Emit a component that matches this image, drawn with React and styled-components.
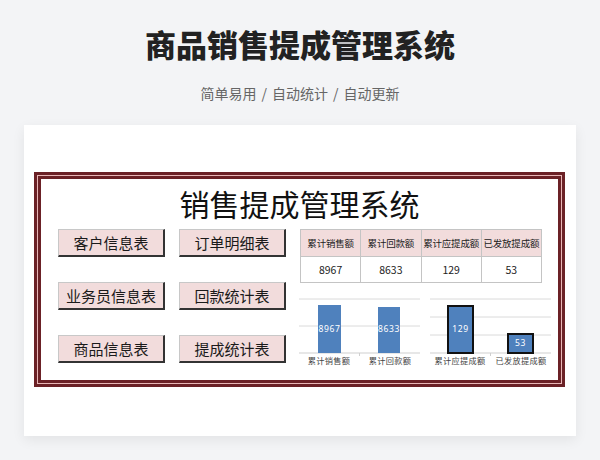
import React from 'react';
import styled, { createGlobalStyle } from 'styled-components';

const GlobalStyle = createGlobalStyle`
  body {
    margin: 0;
    background: #f3f4f6;
    font-family: "Noto Sans CJK SC", "Noto Sans", sans-serif;
  }
`;

const Page = styled.div`
  width: 600px;
  height: 460px;
  overflow: hidden;
  padding-top: 24px;
  box-sizing: border-box;
`;

const Heading = styled.h1`
  margin: 0;
  text-align: center;
  font-size: 31px;
  line-height: 40px;
  font-weight: 900;
  color: #222;
`;

const Tagline = styled.div`
  margin-top: 19px;
  text-align: center;
  font-size: 14px;
  line-height: 20px;
  color: #666;
  span { margin: 0 5px; }
`;

const Card = styled.div`
  margin: 22px 24px 0;
  height: 311px;
  box-sizing: border-box;
  background: #fff;
  padding: 47px 11px 49px 10px;
  box-shadow: 0 4px 12px rgba(0, 0, 0, 0.07);
`;

const Frame = styled.div`
  height: 215px;
  box-sizing: border-box;
  border: 3px solid #6b2126;
  box-shadow: inset 0 0 0 1px #e8b6b6, inset 0 0 0 4px #6b2126;
  padding-top: 8px;
`;

const FrameTitle = styled.div`
  text-align: center;
  font-size: 30px;
  line-height: 40px;
  color: #111;
`;

const Body = styled.div`
  display: flex;
  margin-top: 6px;
  padding-left: 21px;
`;

const ButtonGrid = styled.div`
  display: grid;
  grid-template-columns: 107px 107px;
  grid-auto-rows: 28px;
  column-gap: 14px;
  row-gap: 25px;
  align-content: start;
`;

const SheetButton = styled.div`
  box-sizing: border-box;
  background: #f2dcdc;
  border-top: 1px solid #c8c8c8;
  border-left: 1px solid #c8c8c8;
  border-right: 2px solid #333;
  border-bottom: 2px solid #333;
  display: flex;
  align-items: center;
  justify-content: center;
  font-size: 15px;
  color: #1a1a1a;
`;

const Right = styled.div`
  margin-left: 14px;
  display: flex;
  flex-direction: column;
`;

const Table = styled.table`
  border-collapse: collapse;
  width: 242px;
  table-layout: fixed;
  td {
    border: 1px solid #c4c4c4;
    text-align: center;
    padding: 0;
    color: #222;
  }
`;

const HeadCell = styled.td`
  background: #f2dcdc;
  height: 26px;
  font-size: 9.5px;
  white-space: nowrap;
  letter-spacing: -0.2px;
`;

const DataCell = styled.td`
  height: 25px;
  font-size: 10.5px;
`;

const Charts = styled.div`
  display: flex;
  gap: 10px;
  margin-top: 12px;
  margin-left: -1px;
`;

const BLUE = '#4f81bd';

function Chart({ grid, bars }) {
  return (
    <svg width="121" height="72" viewBox="0 0 121 72">
      {grid.map((y) => (
        <line key={y} x1="0" x2="121" y1={y} y2={y} stroke="#dadada" strokeWidth="1" />
      ))}
      <line x1="0" x2="121" y1="58" y2="58" stroke="#cfcfcf" strokeWidth="1" />
      <line x1="60.5" x2="60.5" y1="58" y2="61" stroke="#cfcfcf" strokeWidth="1" />
      {bars.map((b) => (
        <g key={b.label}>
          <rect
            x={b.x}
            y={b.top}
            width={b.w}
            height={58 - b.top}
            fill={BLUE}
            stroke={b.outline ? '#111' : 'none'}
            strokeWidth={b.outline ? 2 : 0}
          />
          <text
            x={b.x + b.w / 2}
            y={b.ty}
            fill="#fff"
            fontSize="8.5"
            textAnchor="middle"
            letterSpacing="0.6"
            fontFamily="Noto Sans, sans-serif"
          >
            {b.value}
          </text>
          <text
            x={b.cx}
            y="69"
            fill="#444"
            fontSize="8.2"
            textAnchor="middle"
            letterSpacing="0.3"
            fontFamily="Noto Sans CJK SC, sans-serif"
          >
            {b.label}
          </text>
        </g>
      ))}
    </svg>
  );
}

const headers = ['累计销售额', '累计回款额', '累计应提成额', '已发放提成额'];
const values = ['8967', '8633', '129', '53'];
const sheets = ['客户信息表', '订单明细表', '业务员信息表', '回款统计表', '商品信息表', '提成统计表'];

export default function App() {
  return (
    <Page>
      <GlobalStyle />
      <Heading>商品销售提成管理系统</Heading>
      <Tagline>
        简单易用<span>/</span>自动统计<span>/</span>自动更新
      </Tagline>
      <Card>
        <Frame>
          <FrameTitle>销售提成管理系统</FrameTitle>
          <Body>
            <ButtonGrid>
              {sheets.map((s) => (
                <SheetButton key={s}>{s}</SheetButton>
              ))}
            </ButtonGrid>
            <Right>
              <Table>
                <tbody>
                  <tr>
                    {headers.map((h) => (
                      <HeadCell key={h}>{h}</HeadCell>
                    ))}
                  </tr>
                  <tr>
                    {values.map((v) => (
                      <DataCell key={v}>{v}</DataCell>
                    ))}
                  </tr>
                </tbody>
              </Table>
              <Charts>
                <Chart
                  grid={[4, 31]}
                  bars={[
                    { label: '累计销售额', value: '8967', x: 19, w: 23, top: 10, ty: 37, cx: 30 },
                    { label: '累计回款额', value: '8633', x: 79, w: 22, top: 12, ty: 37, cx: 91 },
                  ]}
                />
                <Chart
                  grid={[4, 22, 40]}
                  bars={[
                    { label: '累计应提成额', value: '129', x: 18, w: 25, top: 11, ty: 37, cx: 30, outline: true },
                    { label: '已发放提成额', value: '53', x: 78, w: 25, top: 39, ty: 51, cx: 91, outline: true },
                  ]}
                />
              </Charts>
            </Right>
          </Body>
        </Frame>
      </Card>
    </Page>
  );
}
